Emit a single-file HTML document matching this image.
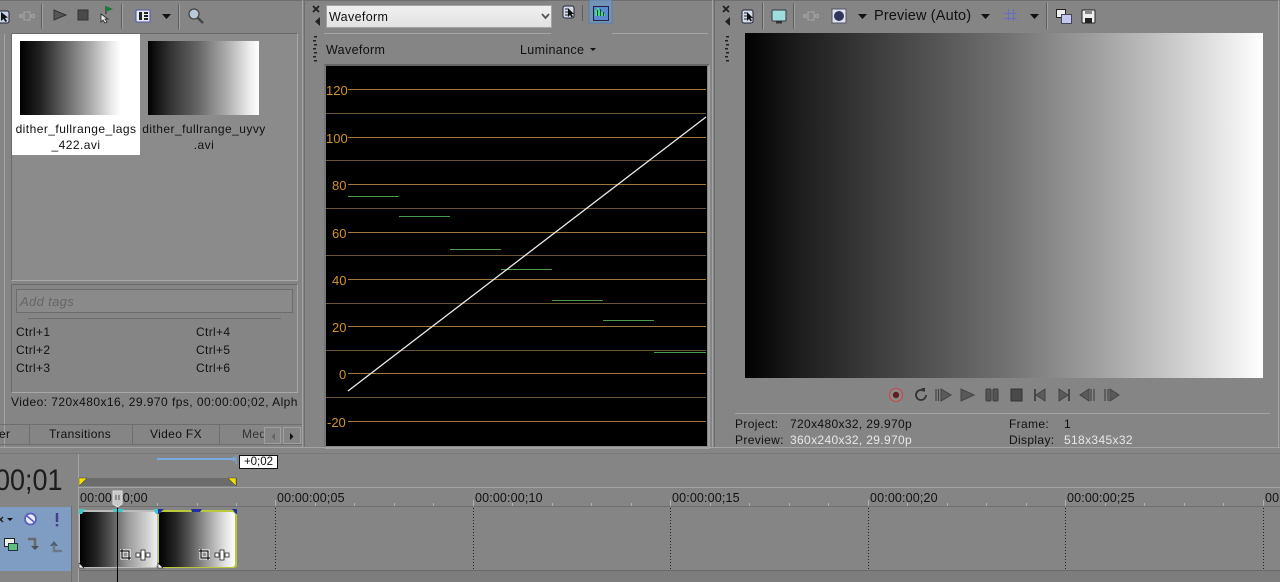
<!DOCTYPE html>
<html><head><meta charset="utf-8"><style>
html,body{margin:0;padding:0;background:#858585;}
#r{position:relative;width:1280px;height:582px;overflow:hidden;background:#858585;font-family:"Liberation Sans",sans-serif;font-size:12px;color:#111;}
#r div,#r span.a{position:absolute;}
.t{white-space:nowrap;line-height:14px;letter-spacing:.35px}
.n{letter-spacing:.45px}
.w{color:#e8e8e8}
.o{color:#d0922a;font-size:13px;line-height:14px;white-space:nowrap}
.l{background:#a4a4a4}
.d{background:#6e6e6e}
.rt{font-size:12.5px;color:#111;white-space:nowrap;line-height:14px;letter-spacing:.15px}
svg{position:absolute;overflow:visible}
</style></head><body><div id="r">

<!-- panel separators -->
<div style="left:0;top:0;width:1280px;height:1px;background:#6e6e6e"></div>
<div class="l" style="left:302px;top:0;width:1px;height:448px"></div>
<div class="d" style="left:304px;top:0;width:1px;height:448px"></div>
<div class="l" style="left:712px;top:0;width:1px;height:448px"></div>
<div class="d" style="left:714px;top:0;width:1px;height:448px"></div>

<!-- LEFT PANEL -->
<div style="left:11px;top:33px;width:287px;height:248px;box-sizing:border-box;background:#8b8b8b;border:1px solid #a8a8a8;border-top-color:#6a6a6a;border-left-color:#6a6a6a"></div>
<div class="l" style="left:4px;top:34px;width:1px;height:414px"></div>
<div style="left:12px;top:34px;width:128px;height:121px;background:#fff"></div>
<div style="left:20px;top:41px;width:101px;height:74px;background:linear-gradient(90deg,#000 0%,#222 20%,#666 45%,#aaa 70%,#eee 92%,#fff 100%)"></div>
<div style="left:148px;top:41px;width:111px;height:74px;background:linear-gradient(90deg,#000 0%,#333 20%,#666 45%,#aaa 70%,#eee 92%,#fff 100%)"></div>
<div class="t n" style="left:12px;top:122px;width:128px;text-align:center;line-height:15.5px">dither_fullrange_lags<br>_422.avi</div>
<div class="t n" style="left:140px;top:122px;width:128px;text-align:center;line-height:15.5px">dither_fullrange_uyvy<br>.avi</div>

<!-- left toolbar -->
<svg style="left:0;top:0" width="300" height="32">
 <rect x="-6" y="11" width="15" height="12" rx="2" fill="#c8d4ea" stroke="#223"/>
 <path d="M1 12l0 9 2.500-2 2 3 1.500-1-2-3 3-.5z" fill="#111"/>
 <g fill="none" stroke="#a8a8a8" stroke-width="1"><circle cx="21" cy="16" r="1.500"/><circle cx="33" cy="16" r="1.500"/><rect x="24" y="12" width="6" height="8"/></g>
 <rect x="41" y="4" width="1" height="25" fill="#5e5e5e"/><rect x="42" y="4" width="1" height="25" fill="#a0a0a0"/>
 <path d="M54 10v10l12-5z" fill="#555" stroke="#333"/>
 <rect x="78" y="10" width="10" height="10" fill="#4a4a4a" stroke="#333"/>
 <path d="M106 6v8" stroke="#222"/><path d="M106 6l7 3-7 3z" fill="#1c7a3c"/>
 <path d="M101 14l0 8 2-2 2 3 2-1-2-3 3 0z" fill="#eee" stroke="#222" stroke-width=".8"/>
 <rect x="121" y="4" width="1" height="25" fill="#5e5e5e"/><rect x="122" y="4" width="1" height="25" fill="#a0a0a0"/>
 <rect x="136" y="10" width="14" height="12" rx="1" fill="#e8eaf5" stroke="#4a55b0"/>
 <path d="M139 12h3v8h-3zM144 12h4v2h-4zM144 15h4v2h-4zM144 18h4v2h-4z" fill="#222"/>
 <path d="M162 14h9l-4.500 5z" fill="#111"/>
 <rect x="178" y="4" width="1" height="25" fill="#5e5e5e"/><rect x="179" y="4" width="1" height="25" fill="#a0a0a0"/>
 <circle cx="194" cy="14" r="5" fill="#b8c8d8" stroke="#444" stroke-width="1.300"/>
 <path d="M198 18l5 5" stroke="#444" stroke-width="2.400"/>
</svg>

<!-- tags panel -->
<div style="left:11px;top:284px;width:287px;height:109px;box-sizing:border-box;border:1px solid #a8a8a8;border-top-color:#6a6a6a;border-left-color:#6a6a6a;background:#858585"></div>
<div style="left:16px;top:289px;width:277px;height:24px;box-sizing:border-box;border:1px solid #6c6c6c;background:#8a8a8a"></div>
<div class="t" style="left:20px;top:295px;font-style:italic;color:#666;font-size:13px">Add tags</div>
<div style="left:28px;top:318px;width:253px;height:1px;background:#6c6c6c"></div>
<div class="t" style="left:16px;top:325px">Ctrl+1</div>
<div class="t" style="left:16px;top:343px">Ctrl+2</div>
<div class="t" style="left:16px;top:361px">Ctrl+3</div>
<div class="t" style="left:196px;top:325px">Ctrl+4</div>
<div class="t" style="left:196px;top:343px">Ctrl+5</div>
<div class="t" style="left:196px;top:361px">Ctrl+6</div>
<div class="t n" style="left:11px;top:395px;width:287px;overflow:hidden">Video: 720x480x16, 29.970 fps, 00:00:00;02, Alpha = None</div>

<!-- tabs -->
<div class="d" style="left:0;top:424px;width:302px;height:1px"></div>
<div class="d" style="left:0;top:444px;width:302px;height:1px"></div>
<div class="t" style="left:-1px;top:427px">er</div>
<div class="d" style="left:29px;top:425px;width:1px;height:19px"></div>
<div class="t" style="left:49px;top:427px">Transitions</div>
<div class="d" style="left:132px;top:425px;width:1px;height:19px"></div>
<div class="t" style="left:150px;top:427px">Video FX</div>
<div class="d" style="left:219px;top:425px;width:1px;height:19px"></div>
<div class="t" style="left:242px;top:427px;color:#333;width:22px;overflow:hidden">Media</div>
<div style="left:264px;top:427px;width:17px;height:17px;border:1px solid #a0a0a0;box-sizing:border-box"></div>
<div style="left:283px;top:427px;width:18px;height:17px;border:1px solid #a0a0a0;box-sizing:border-box"></div>
<svg style="left:0;top:0" width="302" height="448"><path d="M275 433v7l-3.500-3.500z" fill="#666"/><path d="M290 433v7l3.500-3.500z" fill="#111"/></svg>

<!-- MIDDLE PANEL -->
<div style="left:326px;top:5px;width:226px;height:23px;background:linear-gradient(#f0f0f0,#e2e2e2);border:1px solid #a4a4a4;box-sizing:border-box"></div>
<div class="t" style="left:329px;top:10px;font-size:12.5px">Waveform</div>
<div class="l" style="left:324px;top:33px;width:227px;height:1px"></div>
<div class="l" style="left:612px;top:33px;width:96px;height:1px"></div>
<svg style="left:305px;top:0" width="320" height="64">
 <path d="M8 6l6 6M14 6l-6 6" stroke="#222" stroke-width="1.800"/>
 <path d="M15 17v9l-5-4.500z" fill="#222"/>
 <path d="M237 14l3.500 4 3.500-4" fill="none" stroke="#555" stroke-width="1.800"/>
 <g fill="#222"><rect x="9" y="36" width="3" height="1.500"/><rect x="8" y="40" width="3" height="1.500"/><rect x="9" y="44" width="3" height="1.500"/><rect x="8" y="48" width="3" height="1.500"/><rect x="9" y="52" width="3" height="1.500"/><rect x="8" y="56" width="3" height="1.500"/><rect x="9" y="60" width="3" height="1.500"/></g>
 <rect x="258" y="6" width="11" height="12" rx="2" fill="#d5dcea" stroke="#223"/>
 <path d="M260 9h3M260 12h3M260 15h3" stroke="#223"/>
 <path d="M263 8l0 9 2-2 1.500 2.500 1.500-1-1.500-2.500 2.500 0z" fill="#111"/>
 <rect x="277" y="5" width="1" height="16" fill="#5e5e5e"/>
 <rect x="284" y="0" width="23" height="23" fill="#7394b8" stroke="#5d7ea8"/>
 <rect x="288.500" y="6.500" width="15" height="14" fill="#5c8ad0" stroke="#224"/>
 <path d="M290 16v-6h2v-2h2v2h2v2h2v2h2v2z" fill="#3fe07a"/>
 <path d="M292.500 10v6M295.500 9v7M298.500 12v4" stroke="#1c3a58"/>
</svg>
<div class="t" style="left:326px;top:43px;font-size:12.5px">Waveform</div>
<div class="t" style="left:520px;top:43px;font-size:12.5px">Luminance</div>
<svg style="left:589px;top:46px" width="10" height="6"><path d="M1 2h6l-3 3z" fill="#111"/></svg>

<div style="left:324px;top:64px;width:386px;height:385px;box-sizing:border-box;border:2px solid #a0a0a0;border-top-color:#666;border-left-color:#777"></div>
<div style="left:326px;top:66px;width:381px;height:380px;background:#000"></div>
<svg style="left:0;top:0" width="1280" height="582">
 <g shape-rendering="crispEdges" stroke-width="1">
  <g stroke="#a07840">
   <path d="M348 89.500H706M348 137.500H706M348 184.500H706M348 232.500H706M348 279.500H706M348 326.500H706M348 373.500H706M348 421.500H706"/>
  </g>
  <g stroke="#6a5438">
   <path d="M326 113.500H706M326 160.500H706M326 208.500H706M326 255.500H706M326 303.500H706M326 350.500H706M326 397.500H706"/>
  </g>
  <g stroke="#4e9a4e">
   <path d="M348 196.500H399M399 216.500H450M450 249.500H501M501 269.500H552M552 300.500H603M603 320.500H654M654 352.500H706"/>
  </g>
 </g>
 <path d="M348 391L706 117" stroke="#ececec" stroke-width="1.300" fill="none"/>
</svg>
<div class="o" style="left:326px;top:84px">120</div>
<div class="o" style="left:326px;top:132px">100</div>
<div class="o" style="left:332px;top:179px">80</div>
<div class="o" style="left:332px;top:227px">60</div>
<div class="o" style="left:332px;top:274px">40</div>
<div class="o" style="left:332px;top:321px">20</div>
<div class="o" style="left:339px;top:368px">0</div>
<div class="o" style="left:327px;top:416px">-20</div>

<!-- RIGHT PANEL -->
<div style="left:745px;top:33px;width:518px;height:345px;background:linear-gradient(90deg,#000 0%,#1c1c1c 10%,#3c3c3c 25%,#707070 50%,#a0a0a0 68%,#c8c8c8 82%,#fff 100%)"></div>
<svg style="left:715px;top:0" width="420" height="34">
 <path d="M8 6l6 6M14 6l-6 6" stroke="#222" stroke-width="1.800"/>
 <path d="M15 17v9l-5-4.500z" fill="#222"/>
 <rect x="27" y="10" width="11" height="13" rx="2" fill="#d5dcea" stroke="#223"/>
 <path d="M29 13h3M29 16h3M29 19h3" stroke="#223"/>
 <path d="M32 12l0 9 2-2 1.500 2.500 1.500-1-1.500-2.500 2.500 0z" fill="#111"/>
 <rect x="47" y="3" width="1" height="26" fill="#5e5e5e"/><rect x="48" y="3" width="1" height="26" fill="#a0a0a0"/>
 <rect x="57" y="10" width="14" height="11" rx="1" fill="#9fdcdc" stroke="#334"/>
 <rect x="61" y="21" width="6" height="2.500" fill="#333"/>
 <rect x="78" y="3" width="1" height="26" fill="#5e5e5e"/><rect x="79" y="3" width="1" height="26" fill="#a0a0a0"/>
 <g fill="none" stroke="#a8a8a8"><circle cx="90" cy="16" r="1.500"/><circle cx="102" cy="16" r="1.500"/><rect x="93" y="12" width="6" height="8"/></g>
 <rect x="117" y="9" width="14" height="14" fill="#dfe3f2" stroke="#556"/>
 <circle cx="124" cy="16" r="5" fill="#30355a"/>
 <path d="M143 14h9l-4.500 5z" fill="#111"/>
 <path d="M266 14h9l-4.500 5z" fill="#111"/>
 <path d="M293.500 9v12M298.500 9v12M289 13.500h13M289 18.500h13" stroke="#6a6ec0" fill="none"/>
 <path d="M315 14h9l-4.500 5z" fill="#111"/>
 <rect x="331" y="3" width="1" height="26" fill="#5e5e5e"/><rect x="332" y="3" width="1" height="26" fill="#a0a0a0"/>
 <rect x="341.500" y="9.500" width="9" height="8" fill="#eee" stroke="#222"/>
 <rect x="346.500" y="14.500" width="10" height="9" fill="#c4c8f0" stroke="#445"/>
 <rect x="367" y="10" width="13" height="13" rx="1" fill="#eee" stroke="#222"/>
 <rect x="370" y="10" width="7" height="4" fill="#888"/><rect x="370" y="18" width="7" height="5" fill="#222"/>
</svg>
<svg style="left:722px;top:34px" width="10" height="30"><g fill="#222"><rect x="4" y="2" width="3" height="1.500"/><rect x="3" y="6" width="3" height="1.500"/><rect x="4" y="10" width="3" height="1.500"/><rect x="3" y="14" width="3" height="1.500"/><rect x="4" y="18" width="3" height="1.500"/><rect x="3" y="22" width="3" height="1.500"/><rect x="4" y="26" width="3" height="1.500"/></g></svg>
<div class="t" style="left:874px;top:8px;font-size:14.500px;letter-spacing:.15px;line-height:17px">Preview (Auto)</div>

<!-- transport -->
<svg style="left:880px;top:384px" width="250" height="24">
 <circle cx="16" cy="11" r="6.500" fill="#8a8a8a" stroke="#c05050" stroke-width="1.300"/>
 <circle cx="16" cy="11" r="3" fill="#6a1820" stroke="#333" stroke-width=".5"/>
 <path d="M44 7a5 5 0 1 0 2 4" fill="none" stroke="#333" stroke-width="1.800"/><path d="M41 4l4 0 0 4z" fill="#333"/>
 <path d="M56 5v12M58.500 5v12" stroke="#444" stroke-width="1.200"/><path d="M61 5v12l10-6z" fill="#5a5a5a" stroke="#444"/>
 <path d="M81 5v12l13-6z" fill="#5a5a5a" stroke="#444"/>
 <rect x="106" y="5" width="5" height="12" rx="1" fill="#555" stroke="#3c3c3c"/><rect x="113" y="5" width="5" height="12" rx="1" fill="#555" stroke="#3c3c3c"/>
 <rect x="131" y="5" width="11" height="12" fill="#4a4a4a" stroke="#333"/>
 <path d="M155 5v12" stroke="#333" stroke-width="1.500"/><path d="M165 5v12l-9-6z" fill="#5a5a5a" stroke="#444"/>
 <path d="M189 5v12" stroke="#333" stroke-width="1.500"/><path d="M179 5v12l9-6z" fill="#5a5a5a" stroke="#444"/>
 <path d="M209 5v12l-9-6z" fill="#5a5a5a" stroke="#444"/><path d="M211 5v12M214 5v12" stroke="#444" stroke-width="1.200"/>
 <path d="M225 5v12M228 5v12" stroke="#444" stroke-width="1.200"/><path d="M230 5v12l9-6z" fill="#5a5a5a" stroke="#444"/>
</svg>
<div class="l" style="left:735px;top:413px;width:535px;height:1px"></div>
<div class="l" style="left:735px;top:447px;width:545px;height:1px"></div>
<div class="l" style="left:1278px;top:0;width:1px;height:448px"></div>
<div class="t" style="left:735px;top:417px">Project:</div>
<div class="t" style="left:790px;top:417px">720x480x32, 29.970p</div>
<div class="t" style="left:735px;top:433px">Preview:</div>
<div class="t w" style="left:790px;top:433px">360x240x32, 29.970p</div>
<div class="t" style="left:1009px;top:417px">Frame:</div>
<div class="t" style="left:1064px;top:417px">1</div>
<div class="t" style="left:1009px;top:433px">Display:</div>
<div class="t w" style="left:1064px;top:433px">518x345x32</div>

<!-- TIMELINE -->
<div class="l" style="left:0;top:447px;width:1280px;height:1px"></div>
<div class="d" style="left:0;top:453px;width:1280px;height:1px;opacity:.5"></div>
<div class="l" style="left:78px;top:454px;width:1px;height:128px"></div>
<div class="d" style="left:71px;top:506px;width:1px;height:76px"></div>
<svg style="left:0;top:0;" width="1280" height="582">
 <path d="M157 459H234" stroke="#7aa8e0" stroke-width="2"/>
 <path d="M236 455v9" stroke="#7aa8e0"/><path d="M233 456l3 3-3 3z" fill="#7aa8e0"/>
</svg>
<div style="left:239px;top:455px;width:39px;height:14px;background:#fff;border:1px solid #111;box-sizing:border-box;font-size:11.500px;line-height:12px;text-align:center;color:#111">+0;02</div>
<div style="left:79px;top:478px;width:158px;height:8px;background:#6c6c6c"></div>
<svg style="left:78px;top:478px" width="160" height="10"><path d="M1 0h8L1 8z" fill="#f2e000" stroke="#222" stroke-width=".4"/><path d="M158 0h-8l8 8z" fill="#f2e000" stroke="#222" stroke-width=".4"/></svg>
<div style="left:-5px;top:463px;font-size:30px;line-height:36px;color:#1c1c1c;white-space:nowrap;transform:scaleX(.9);transform-origin:0 0">00;01</div>
<div class="l" style="left:78px;top:487px;width:1202px;height:1px"></div>

<div class="rt" style="left:80px;top:491px">00:00:00;00</div>
<div class="rt" style="left:277px;top:491px">00:00:00;05</div>
<div class="rt" style="left:475px;top:491px">00:00:00;10</div>
<div class="rt" style="left:672px;top:491px">00:00:00;15</div>
<div class="rt" style="left:870px;top:491px">00:00:00;20</div>
<div class="rt" style="left:1067px;top:491px">00:00:00;25</div>
<div class="rt" style="left:1265px;top:491px">00:00:00;00</div>
<div class="d" style="left:79px;top:506px;width:1201px;height:1px"></div>
<svg style="left:0;top:0" width="1280" height="582" shape-rendering="crispEdges">
 <g stroke="#222" stroke-dasharray="1 2" fill="none">
  <path d="M275.500 508V570M473.500 508V570M670.500 508V570M868.500 508V570M1065.500 508V570M1263.500 508V570"/>
 </g>
 <g stroke="#b0b0b0">
  <path d="M275.500 500V506M473.500 500V506M670.500 500V506M868.500 500V506M1065.500 500V506M1263.500 500V506"/>
  <path d="M118.500 503V506M157.500 503V506M197.500 503V506M236.500 503V506M315.500 503V506M354.500 503V506M394.500 503V506M433.500 503V506M512.500 503V506M552.500 503V506M591.500 503V506M631.500 503V506M710.500 503V506M749.500 503V506M789.500 503V506M828.500 503V506M907.500 503V506M947.500 503V506M986.500 503V506M1026.500 503V506M1105.500 503V506M1144.500 503V506M1184.500 503V506M1223.500 503V506"/>
 </g>
</svg>
<div style="left:79px;top:570px;width:1201px;height:1px;background:#6a6a6a"></div>
<div style="left:79px;top:571px;width:1201px;height:11px;background:#7d7d7d"></div>

<!-- track header -->
<div style="left:0;top:507px;width:71px;height:64px;background:#7f9cc2"></div>
<svg style="left:0;top:507px" width="72" height="64">
 <path d="M-2 10l5 5M3 10l-5 5" stroke="#222" stroke-width="1.400"/>
 <path d="M7 11h6l-3 3z" fill="#111"/>
 <circle cx="30.500" cy="12" r="5.500" fill="#eef" stroke="#5a60c0" stroke-width="1.800"/><path d="M27 9l7 6" stroke="#5a60c0" stroke-width="1.600"/>
 <path d="M57 6v9" stroke="#4a3a90" stroke-width="2.400"/><rect x="55.800" y="17" width="2.400" height="2.400" fill="#4a3a90"/>
 <rect x="4.500" y="31.500" width="10" height="8" fill="#e8f0e8" stroke="#222"/>
 <rect x="8.500" y="36.500" width="9" height="7" fill="#60c080" stroke="#234"/>
 <path d="M28 32h7v7" fill="none" stroke="#6a6a6a" stroke-width="2.500"/><path d="M31 39h8l-4 4z" fill="#4e4e4e"/>
 <path d="M54 34l-4 5h8z" fill="#4e5e70"/><path d="M54 38v6h8" fill="none" stroke="#6a7a88" stroke-width="2.500"/>
</svg>

<!-- clips -->
<div style="left:79px;top:510px;width:79px;height:58px;background:#bbb;border-radius:3px"></div>
<div style="left:80px;top:512px;width:77px;height:55px;background:linear-gradient(90deg,#000 0%,#262626 22%,#555 40%,#999 62%,#ccc 85%,#eee 100%);border-radius:3px"></div>
<div style="left:158px;top:510px;width:79px;height:58px;background:#b9c73a;border-radius:3px"></div>
<div style="left:159px;top:512px;width:76px;height:55px;background:linear-gradient(90deg,#000 0%,#262626 22%,#555 40%,#999 62%,#ddd 85%,#fff 100%);border-radius:3px"></div>
<svg style="left:0;top:0" width="300" height="582">
 <path d="M79 509h6l-3 5h-3z" fill="#40c8c8"/><path d="M153 509h5v5h-2z" fill="#40c8c8"/>
 <path d="M112 509h12l-2 3h-8z" fill="#40c8c8"/>
 <path d="M158 509h6l-5 5h-1z" fill="#2030a0"/><path d="M232 509h5v5h-1z" fill="#2030a0"/>
 <path d="M191 509h11l-2 3h-8z" fill="#2030a0"/>
 <path d="M79 563v5h5z" fill="#fff" stroke="#222" stroke-width=".6"/><path d="M158 563v5h5z" fill="#fff" stroke="#222" stroke-width=".6"/>
 <g fill="none" stroke="#fff" stroke-width="3">
  <path d="M122 549v9h9M120 551h9v9"/><path d="M201 549v9h9M199 551h9v9"/>
 </g>
 <g fill="none" stroke="#111" stroke-width="1.200">
  <path d="M122 549v9h9M120 551h9v9"/><path d="M201 549v9h9M199 551h9v9"/>
 </g>
 <g fill="#fff" stroke="#222" stroke-width=".8">
  <rect x="141" y="550" width="4" height="10"/><rect x="136" y="553" width="4" height="4"/><rect x="146" y="553" width="4" height="4"/>
  <rect x="220" y="550" width="4" height="10"/><rect x="215" y="553" width="4" height="4"/><rect x="225" y="553" width="4" height="4"/>
 </g>
 <path d="M117.500 505V582" stroke="#000" stroke-width="1" shape-rendering="crispEdges"/>
 <path d="M113 491h9v13l-4.500 3-4.500-3z" fill="#c8c8c8" stroke="#e0e0e0"/>
 <path d="M116 495v5M119 495v5" stroke="#666" stroke-width="1.200"/>
</svg>
</div></body></html>
